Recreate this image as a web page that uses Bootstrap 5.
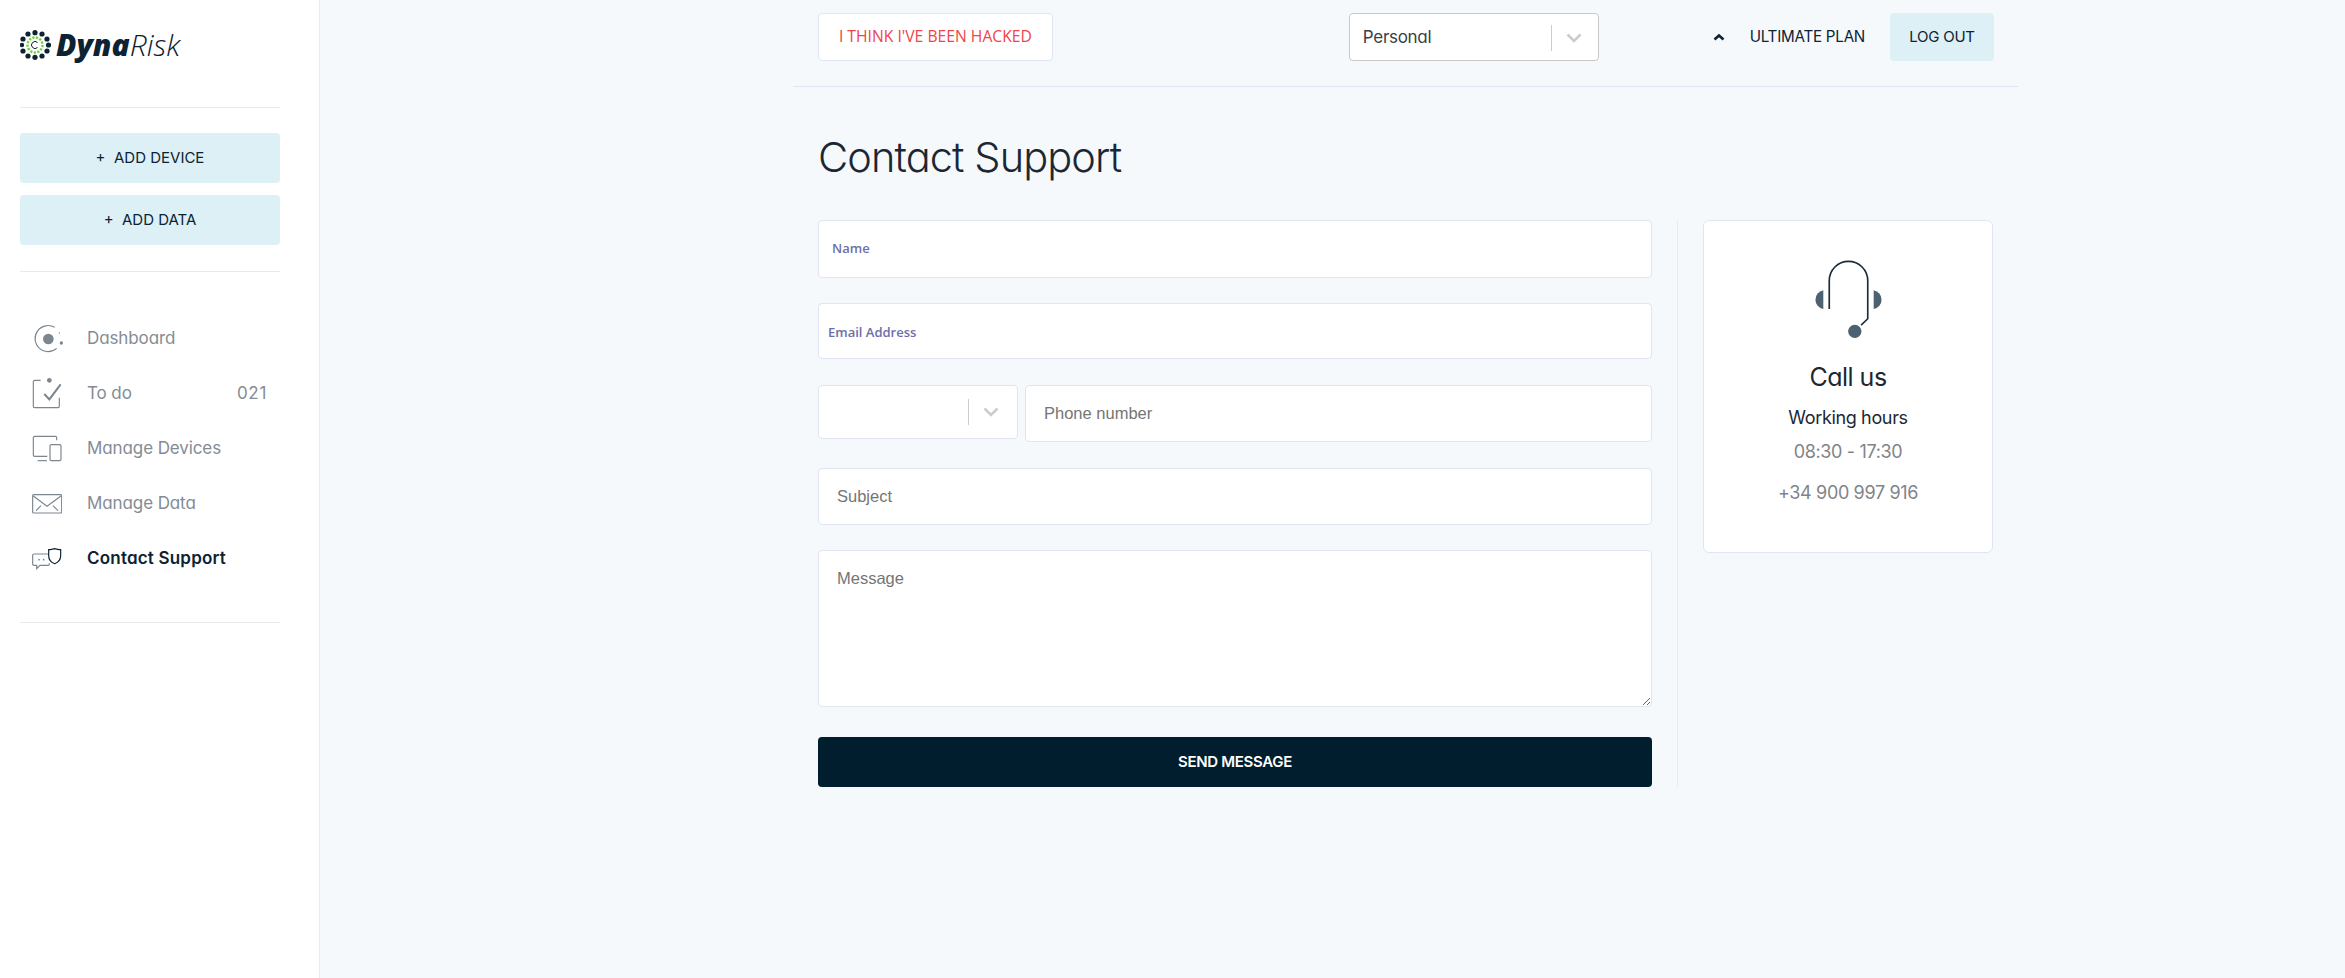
<!DOCTYPE html>
<html lang="en">
<head>
  <meta charset="UTF-8" />
  <meta name="viewport" content="width=device-width, initial-scale=1" />
  <title>Contact Support - DynaRisk</title>
  <link href="https://cdn.jsdelivr.net/npm/bootstrap@5.3.0/dist/css/bootstrap.min.css" rel="stylesheet" />
  <style>
    body {
      background: #f6f9fc;
      color: #1c2733;
      font-family: Inter, "Noto Sans", sans-serif;
      font-feature-settings: "cv11";
      font-size: 17px;
      min-height: 978px;
    }
    .side-bar {
      width: 320px;
      min-height: 978px;
      padding: 0 39px 0 20px;
      background: #fff;
      border-right: 1px solid #e8ebef;
      flex-shrink: 0;
    }
    .brand-row { height: 107px; padding-top: 29px; }
    .brand-name {
      font-family: "Open Sans", sans-serif;
      font-style: italic;
      font-size: 30px;
      line-height: 32px;
      color: #0c2333;
      font-feature-settings: normal;
    }
    .brand-name b { font-weight: 800; }
    .brand-name span { font-weight: 300; }
    .side-rule { height: 1px; background: #e7e9ec; }
    .rule-upper { margin-bottom: 25px; }
    .rule-lower { margin-top: 26px; }
    .btn-pale {
      display: block;
      background: #ddf0f6;
      color: #0c2333;
      border: 0;
      border-radius: 4px;
      font-size: 15px;
    }
    .btn-pale:hover { background: #cde8f0; color: #0c2333; }
    .side-btn { width: 100%; height: 50px; line-height: 50px; padding: 0; margin-bottom: 12px; }
    .side-nav { padding: 39px 0 36px; }
    .side-link {
      height: 55px;
      padding: 0 13px 0 12px;
      color: #838c95;
      font-size: 17px;
      letter-spacing: -0.1px;
    }
    .side-link:hover { color: #5c6670; }
    .side-link.active-link { color: #0c2333; font-weight: 600; letter-spacing: 0.2px; }
    .link-count { letter-spacing: 0.7px; }
    .link-icon { width: 55px; flex-shrink: 0; }
    .link-icon svg { display: block; fill: none; stroke: #7b868f; stroke-width: 3.5; }
    .page-col { width: 1225px; margin-left: 473px; }
    .top-strip {
      height: 87px;
      padding: 13px 24px 0 25px;
      border-bottom: 1px solid #e1e5f1;
    }
    .hacked-btn {
      width: 235px;
      height: 48px;
      padding: 0;
      background: #fff;
      border: 1px solid #e1e5f1;
      border-radius: 4px;
      color: #f0444a;
      font-family: "Open Sans", sans-serif;
      font-size: 15.7px;
      font-feature-settings: normal;
    }
    .pick-box {
      background: #fff;
      border: 1px solid #e1e5f1;
      border-radius: 4px;
    }
    .plan-pick {
      width: 250px;
      height: 48px;
      margin-left: 296px;
      padding: 2px 1px 0 13px;
      border-color: #c9c9c9;
      font-size: 17px;
      letter-spacing: -0.3px;
      color: #3a4048;
    }
    .pick-arrow {
      height: 26px;
      width: 46px;
      border-left: 1px solid #ccc;
    }
    .plan-caret { margin: 16px 0 0 114px; }
    .plan-name { margin: 9px 25px 0 25px; font-size: 15.2px; letter-spacing: -0.25px; color: #0c2333; white-space: nowrap; }
    .logout-btn { width: 104px; height: 48px; line-height: 48px; padding: 0; text-align: center; letter-spacing: -0.25px; }
    .page-title {
      margin: 42px 0 0 25px;
      height: 91px;
      font-size: 41.5px;
      font-weight: 300;
      line-height: 56px;
      letter-spacing: -0.9px;
      color: #1c2733;
    }
    .body-row { padding: 0 24px 0 25px; }
    .form-side { width: 834px; }
    .text-box {
      height: 57px;
      border-color: #e1e5f1;
      border-radius: 4px;
      padding: 0 18px;
      font-family: "Liberation Sans", sans-serif;
      font-size: 16.5px;
      color: #333;
    }
    .text-box::placeholder { color: #757575; opacity: 1; }
    .box-name { height: 58px; padding: 0 13px 4px; margin-bottom: 25px; }
    .box-email { height: 56px; padding-left: 9px; margin-bottom: 26px; }
    .box-name::placeholder, .box-email::placeholder {
      font-family: "Open Sans", sans-serif;
      font-size: 13px;
      font-weight: 600;
      color: #6d6ea8;
    }
    .phone-row { margin-bottom: 26px; }
    .box-subject { margin-bottom: 25px; }
    .box-message { height: 157px; padding: 15px 18px; margin-bottom: 30px; }
    .code-pick { width: 200px; height: 54px; flex-shrink: 0; margin-right: 7px; padding-right: 5px; }
    .code-pick .pick-arrow { width: 44px; }
    .send-btn {
      height: 50px;
      background: #001e2e;
      color: #fff;
      border: 0;
      border-radius: 4px;
      font-size: 15px;
      font-weight: 600;
      letter-spacing: -0.3px;
    }
    .send-btn:hover { background: #0b3045; color: #fff; }
    .info-side {
      height: 567px;
      margin-left: 25px;
      padding-left: 25px;
      border-left: 1px solid #e8ebf2;
    }
    .call-card {
      width: 290px;
      height: 333px;
      padding-top: 39px;
      border: 1px solid #e1e5f1;
      border-radius: 6px;
      text-align: center;
    }
    .call-card svg { display: block; margin: 0 auto; }
    .call-title { margin: 21px 0 0; font-size: 25px; font-weight: 400; line-height: 34px; letter-spacing: -0.5px; color: #1c2733; }
    .call-line { margin: 0; font-size: 18px; letter-spacing: -0.35px; line-height: 24px; }
    .hours-line { margin-top: 12px; }
    .muted-line { color: #7f8489; }
    .time-line { margin-top: 10px; }
    .tel-line { margin-top: 17px; }
  </style>
</head>
<body>

<div class="d-flex">
  <!-- Sidebar -->
  <aside class="side-bar">
    <div class="brand-row d-flex align-items-center align-self-start">
      <div class="d-flex align-items-center mb-auto">
        <svg width="32" height="30" viewBox="0 0 32 30" class="me-1">
          <g fill="#0c2333">
            <circle cx="15" cy="2.7" r="2.6"/><circle cx="22" cy="4" r="2.6"/><circle cx="27" cy="9" r="2.6"/><circle cx="28.5" cy="15" r="2.6"/>
            <circle cx="27" cy="21" r="2.6"/><circle cx="22" cy="26" r="2.6"/><circle cx="15" cy="27.3" r="2.6"/><circle cx="8" cy="26" r="2.6"/>
            <circle cx="3" cy="21" r="2.6"/><circle cx="2" cy="15" r="2.2"/><circle cx="3" cy="9" r="2.6"/><circle cx="8" cy="4" r="2.6"/>
          </g>
          <circle cx="15" cy="15" r="7.5" fill="none" stroke="#6fd13f" stroke-width="2.4" stroke-dasharray="2.2 1.4"/>
          <path d="M17.5 12.5a3.5 3.5 0 1 0 0 5" fill="none" stroke="#0c2333" stroke-width="1"/>
        </svg>
        <div class="brand-name"><b>Dyna</b><span>Risk</span></div>
      </div>
    </div>
    <div class="side-rule rule-upper"></div>
    <button class="btn btn-pale side-btn" type="button">+&nbsp; ADD DEVICE</button>
    <button class="btn btn-pale side-btn" type="button">+&nbsp; ADD DATA</button>
    <div class="side-rule rule-lower"></div>

    <nav class="nav flex-column side-nav">
      <a class="nav-link side-link d-flex align-items-center" href="#">
        <span class="link-icon">
          <svg width="33" height="32" viewBox="92 92 99 96">
            <path d="M160 105A39 39 0 1 0 166 168"/>
            <circle cx="141" cy="140" r="16" fill="#7b868f" stroke="none"/>
            <circle cx="180" cy="152" r="5" fill="#7b868f" stroke="none"/>
            <circle cx="174" cy="122" r="2" fill="#7b868f" stroke="none"/>
          </svg>
        </span>
        Dashboard
      </a>
      <a class="nav-link side-link d-flex align-items-center" href="#">
        <span class="link-icon">
          <svg width="30" height="33" viewBox="96 258 90 99">
            <path d="M122 268H104a4 4 0 0 0-4 4v74a4 4 0 0 0 4 4h70a4 4 0 0 0 4-4V320"/>
            <path d="M133 309l15 16 34-45" stroke-width="6"/>
            <circle cx="148" cy="268" r="7" fill="#7b868f" stroke="none"/>
          </svg>
        </span>
        <span class="flex-grow-1">To do</span>
        <span class="link-count">021</span>
      </a>
      <a class="nav-link side-link d-flex align-items-center" href="#">
        <span class="link-icon">
          <svg width="30" height="27" viewBox="98 433 90 81">
            <path d="M172 449v-8a4 4 0 0 0-4-4H106a4 4 0 0 0-4 4v52a4 4 0 0 0 4 4h38"/>
            <rect x="152" y="462" width="33" height="48" rx="4"/>
            <path d="M115 510h28"/>
          </svg>
        </span>
        Manage Devices
      </a>
      <a class="nav-link side-link d-flex align-items-center" href="#">
        <span class="link-icon">
          <svg width="30" height="20" viewBox="96 606 90 60">
            <rect x="98" y="608" width="87" height="55" rx="3"/>
            <path d="M100 612l41 31 42-31M108 656l15-15M174 656l-15-15"/>
          </svg>
        </span>
        Manage Data
      </a>
      <a class="nav-link side-link active-link d-flex align-items-center" href="#">
        <span class="link-icon">
          <svg width="30" height="22" viewBox="98 768 90 66">
            <path d="M146 786h-42a4 4 0 0 0-4 4v26a4 4 0 0 0 4 4h8v10l10-10h24a4 4 0 0 0 4-4v-2"/>
            <circle cx="119" cy="803" r="2.5" fill="#7b868f" stroke="none"/>
            <circle cx="133" cy="803" r="2.5" fill="#7b868f" stroke="none"/>
            <path d="M148 773c6 0 12-2 18-3 6 1 12 3 18 3v18c0 12-8 20-18 24-10-4-18-12-18-24z" stroke="#0c2333"/>
          </svg>
        </span>
        Contact Support
      </a>
    </nav>
    <div class="side-rule"></div>
  </aside>

  <!-- Main column -->
  <main class="page-col">
    <div class="top-strip d-flex align-items-start">
      <button class="btn hacked-btn" type="button">I THINK I'VE BEEN HACKED</button>
      <div class="pick-box plan-pick d-flex align-items-center justify-content-between">
        <span>Personal</span>
        <span class="pick-arrow d-flex align-items-center justify-content-center">
          <svg width="16" height="10" viewBox="0 0 16 10"><path d="M1.5 1.5L8 8l6.5-6.5" fill="none" stroke="#ccc" stroke-width="2.6"/></svg>
        </span>
      </div>
      <svg class="plan-caret" width="12" height="24" viewBox="0 0 12 24"><path d="M1.5 10.5l4.5-4 4.5 4" fill="none" stroke="#0c2333" stroke-width="2.6"/></svg>
      <span class="plan-name lh-lg">ULTIMATE PLAN</span>
      <a class="btn btn-pale logout-btn" href="#">LOG OUT</a>
    </div>

    <h1 class="page-title">Contact Support</h1>

    <div class="body-row d-flex align-items-start">
      <form class="form-side" onsubmit="return false">
        <input class="form-control text-box box-name" type="text" placeholder="Name" />
        <input class="form-control text-box box-email" type="email" placeholder="Email Address" />
        <div class="phone-row d-flex align-items-start">
          <div class="pick-box code-pick d-flex align-items-center justify-content-end">
            <span class="pick-arrow d-flex align-items-center justify-content-center">
              <svg width="16" height="10" viewBox="0 0 16 10"><path d="M1.5 1.5L8 8l6.5-6.5" fill="none" stroke="#ccc" stroke-width="2.6"/></svg>
            </span>
          </div>
          <input class="form-control text-box" type="tel" placeholder="Phone number" />
        </div>
        <input class="form-control text-box box-subject" type="text" placeholder="Subject" />
        <textarea class="form-control text-box box-message" placeholder="Message"></textarea>
        <button class="btn send-btn w-100" type="submit">SEND MESSAGE</button>
      </form>

      <div class="info-side">
        <div class="call-card bg-white">
          <svg width="73" height="79" viewBox="455 150 220 238">
            <path d="M507 298V212a58 58 0 0 1 116 0V327l-20 19" fill="none" stroke="#1c2d3a" stroke-width="5"/>
            <path d="M489 241a29 29 0 0 0 0 57z" fill="#4d6270"/>
            <path d="M641 241a29 29 0 0 1 0 57z" fill="#4d6270"/>
            <circle cx="584" cy="365" r="20" fill="#4d6270"/>
          </svg>
          <h2 class="call-title">Call us</h2>
          <p class="call-line hours-line">Working hours</p>
          <p class="call-line muted-line time-line">08:30 - 17:30</p>
          <p class="call-line muted-line tel-line">+34 900 997 916</p>
        </div>
      </div>
    </div>
  </main>
</div>

<script src="https://cdn.jsdelivr.net/npm/bootstrap@5.3.0/dist/js/bootstrap.bundle.min.js"></script>
</body>
</html>
